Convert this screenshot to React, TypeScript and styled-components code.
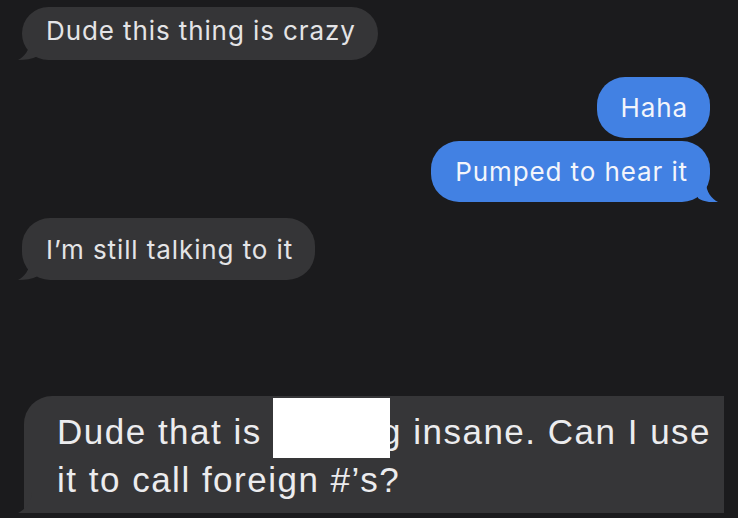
import styled, { createGlobalStyle } from "styled-components";

const GlobalStyle = createGlobalStyle`
  html, body {
    margin: 0;
    padding: 0;
    background: #1b1b1d;
  }
  body {
    font-family: Inter, "Open Sans", "Liberation Sans", sans-serif;
  }
`;

const Screen = styled.div`
  width: 738px;
  height: 518px;
  overflow: hidden;
  background: #1b1b1d;
  display: flex;
  flex-direction: column;
`;

const Thread = styled.div`
  display: flex;
  flex-direction: column;
  padding: 7px 28px 0 22px;
`;

const Row = styled.div<{ $me?: boolean; $gap: number }>`
  display: flex;
  justify-content: ${(p) => (p.$me ? "flex-end" : "flex-start")};
  margin-top: ${(p) => p.$gap}px;
`;

const Bubble = styled.div<{ $me?: boolean; $tail?: boolean; $h: number; $lift?: number }>`
  position: relative;
  height: ${(p) => p.$h}px;
  box-sizing: border-box;
  display: flex;
  align-items: center;
  padding: 0 22px ${(p) => p.$lift ?? 0}px 24px;
  border-radius: 28px;
  font-size: 26px;
  letter-spacing: 0.9px;
  color: ${(p) => (p.$me ? "#f3f5fb" : "#e4e4e6")};
  background: ${(p) => (p.$me ? "#4281e3" : "#353537")};

  ${(p) =>
    p.$tail &&
    (p.$me
      ? `
    &::after {
      content: "";
      position: absolute;
      right: -8px;
      bottom: 0;
      width: 20px;
      height: 20px;
      background: #4281e3;
      clip-path: path("M0 0 L8 0 C8 10 14 17 20 20 C12 21 4 19 0 16 Z");
    }
  `
      : `
    &::after {
      content: "";
      position: absolute;
      left: -4px;
      bottom: 0;
      width: 20px;
      height: 20px;
      background: #353537;
      clip-path: path("M12 0 L20 0 L20 16 C14 19 7 20 0 20 C6 17 12 10 12 0 Z");
    }
  `)}
`;

const Spacer = styled.div`
  height: 116px;
`;

const BigBubble = styled.div`
  position: relative;
  margin: 0 14px 0 24px;
  height: 117px;
  background: #363638;
  border-top-left-radius: 28px;
  padding: 14px 0 0 33px;
  box-sizing: border-box;
  color: #ececee;
  font-family: "Liberation Sans", Arial, sans-serif;
  font-size: 35px;
  line-height: 44px;
  letter-spacing: 1.5px;
  white-space: nowrap;

  &::after {
    content: "";
    position: absolute;
    left: -6px;
    bottom: 0;
    width: 24px;
    height: 22px;
    background: #363638;
    clip-path: path("M14 0 L24 0 L24 22 L0 22 C8 18 14 10 14 0 Z");
  }
`;

const Redact = styled.span`
  position: relative;
  z-index: 1;
  display: inline-block;
  width: 117px;
  height: 60px;
  background: #ffffff;
  vertical-align: -14px;
  margin: -12px -9px 0 0;
`;

export default function App() {
  return (
    <Screen>
      <GlobalStyle />
      <Thread>
        <Row $gap={0}>
          <Bubble $tail $h={53} $lift={6}>Dude this thing is crazy</Bubble>
        </Row>
        <Row $me $gap={17}>
          <Bubble $me $h={61}>Haha</Bubble>
        </Row>
        <Row $me $gap={3}>
          <Bubble $me $tail $h={61}>Pumped to hear it</Bubble>
        </Row>
        <Row $gap={16}>
          <Bubble $tail $h={62}>I’m still talking to it</Bubble>
        </Row>
      </Thread>
      <Spacer />
      <BigBubble>
        Dude that is <Redact />g insane. Can I use
        <br />
        it to call foreign #’s?
      </BigBubble>
    </Screen>
  );
}
